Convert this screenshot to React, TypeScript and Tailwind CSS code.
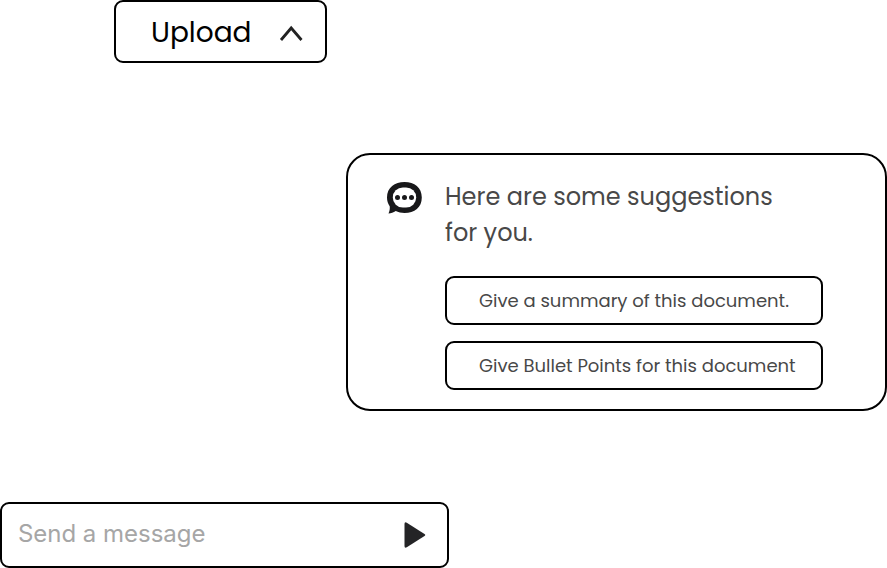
import React from "react";

function ChatIcon() {
  return (
    <svg width="36" height="33" viewBox="0 0 36 33" className="block shrink-0">
      <path
        d="M17.500 1C27.500 1 34.800 6.500 34.800 16.500C34.800 26.500 27.500 32 17.500 32C14.300 32 11.300 31.300 8.700 30C6.500 31.500 4 32.400 1.500 32.600C2.500 30.300 3.100 27.800 2.700 25.300C1 22.800 0 19.900 0 16.500C0 6.500 7.800 1 17.500 1Z"
        fill="#18181a"
      />
      <rect x="5.800" y="6.400" width="23.400" height="20.200" rx="10.100" fill="white" />
      <circle cx="10.500" cy="16.500" r="2.500" fill="#18181a" />
      <circle cx="17.500" cy="16.500" r="2.500" fill="#18181a" />
      <circle cx="24.500" cy="16.500" r="2.500" fill="#18181a" />
    </svg>
  );
}

function Suggestion({ children }: { children: React.ReactNode }) {
  return (
    <button className="flex h-[49px] w-[378px] items-center rounded-[9px] border-2 border-black pl-8 text-left text-[18px] whitespace-nowrap text-[#484848]">
      {children}
    </button>
  );
}

export default function App() {
  return (
    <main className="flex h-[568px] w-[887px] flex-col overflow-hidden bg-white font-['Poppins','Inter',sans-serif]">
      <button className="ml-[114px] flex h-[63px] w-[213px] shrink-0 items-center rounded-[9px] border-2 border-black pl-[35px] text-[28px] text-black">
        <span className="w-[128px] pt-0.5 text-left">Upload</span>
        <svg width="24" height="18" viewBox="0 0 24 18" className="block">
          <path d="M2 17L12.200 5L22.500 17" fill="none" stroke="#222" strokeWidth="2.800" />
        </svg>
      </button>

      <section className="mt-[90px] flex h-[258px] w-[541px] shrink-0 self-end rounded-[24px] border-2 border-black pt-[26px] pl-[39px]">
        <ChatIcon />
        <div className="ml-[22px]">
          <p className="-mt-0.5 text-[24px] leading-9 text-[#484848]">
            Here are some suggestions
            <br />
            for you.
          </p>
          <div className="mt-[25px] flex flex-col gap-4">
            <Suggestion>Give a summary of this document.</Suggestion>
            <Suggestion>Give Bullet Points for this document</Suggestion>
          </div>
        </div>
      </section>

      <form className="mt-[91px] flex h-[66px] w-[449px] shrink-0 items-center rounded-[9px] border-2 border-black pl-4">
        <input
          type="text"
          aria-label="Message"
          placeholder="Send a message"
          className="w-[386px] pb-0.5 font-['Inter',sans-serif] text-[24px] tracking-[-0.03px] outline-none placeholder:text-[#a6a6a6]"
        />
        <button type="button" aria-label="Send" className="shrink-0">
          <svg width="22" height="26" viewBox="0 0 22 26" className="block">
            <path d="M0.500 2Q0.500 -0.500 2.800 0.800L20.500 12Q22 13 20.500 14L2.800 25.200Q0.500 26.500 0.500 24Z" fill="#242426" />
          </svg>
        </button>
      </form>
    </main>
  );
}
